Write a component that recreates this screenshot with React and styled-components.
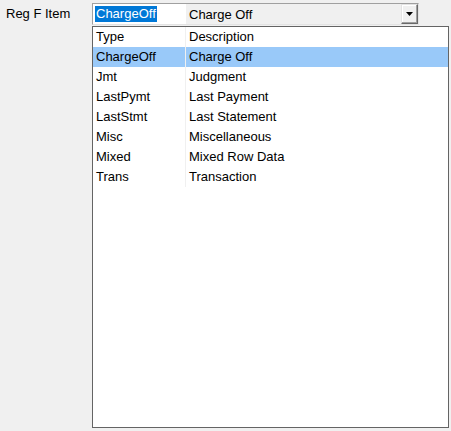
import React from 'react';
import styled, { createGlobalStyle } from 'styled-components';

const GlobalStyle = createGlobalStyle`
  html, body {
    margin: 0;
    padding: 0;
    background: #f0f0f0;
  }
  body {
    font-family: "Liberation Sans", Arial, sans-serif;
    font-size: 13px;
    color: #000;
  }
`;

const Page = styled.div`
  width: 451px;
  height: 431px;
  display: flex;
  align-items: flex-start;
  padding: 3px 0 0 6px;
  box-sizing: border-box;
`;

const Label = styled.div`
  width: 86px;
  flex: none;
  line-height: 21px;
  padding-top: 0px;
`;

const Field = styled.div`
  display: flex;
  flex-direction: column;
  gap: 1px;
`;

const Combo = styled.div`
  width: 327px;
  height: 22px;
  box-sizing: border-box;
  display: flex;
  border: 1px solid #a0a0a0;
  border-bottom-color: #e3e3e3;
  border-right-color: #e3e3e3;
  background: #f0f0f0;
`;

const ComboCell = styled.div`
  width: ${p => p.$w ? `${p.$w}px` : 'auto'};
  flex: ${p => p.$w ? 'none' : '1'};
  background: ${p => p.$white ? '#fff' : '#f0f0f0'};
  display: flex;
  align-items: center;
  padding-left: ${p => p.$pad}px;
`;

const Selected = styled.span`
  background: #0078d7;
  color: #fff;
  padding: 0 1px;
  line-height: 16px;
`;

const DropButton = styled.div`
  width: 17px;
  height: 20px;
  box-sizing: border-box;
  flex: none;
  display: flex;
  align-items: center;
  justify-content: center;
  background: #f0f0f0;
  border-top: 1px solid #e3e3e3;
  border-left: 1px solid #e3e3e3;
  border-right: 1px solid #696969;
  border-bottom: 1px solid #696969;
  box-shadow: inset -1px -1px 0 #a0a0a0, inset 1px 1px 0 #fff;
`;

const List = styled.div`
  width: 357px;
  height: 402px;
  box-sizing: border-box;
  border: 1px solid #646464;
  background: #fff;
`;

const Row = styled.div`
  display: flex;
  height: 20px;
  line-height: 20px;
  background: ${p => p.$active ? '#99c9f9' : '#fff'};
`;

const Cell = styled.div`
  flex: ${p => p.$grow ? '1' : 'none'};
  width: ${p => p.$grow ? 'auto' : '89px'};
  padding-left: 3px;
  border-right: ${p => p.$grow ? 'none' : '1px solid #f0f0f0'};
  white-space: nowrap;
`;

const rows = [
  ['Type', 'Description'],
  ['ChargeOff', 'Charge Off'],
  ['Jmt', 'Judgment'],
  ['LastPymt', 'Last Payment'],
  ['LastStmt', 'Last Statement'],
  ['Misc', 'Miscellaneous'],
  ['Mixed', 'Mixed Row Data'],
  ['Trans', 'Transaction'],
];

const Arrow = () => (
  <svg width="7" height="4" viewBox="0 0 7 4">
    <path d="M0 0 H7 L3.5 4 Z" fill="#000" />
  </svg>
);

export default function App() {
  return (
    <>
      <GlobalStyle />
      <Page>
        <Label>Reg F Item</Label>
        <Field>
          <Combo>
            <ComboCell $w={91} $white $pad={2}>
              <Selected>ChargeOff</Selected>
            </ComboCell>
            <ComboCell $pad={3}>Charge Off</ComboCell>
            <DropButton><Arrow /></DropButton>
          </Combo>
          <List>
            {rows.map(([t, d], i) => (
              <Row key={t} $active={i === 1}>
                <Cell>{t}</Cell>
                <Cell $grow>{d}</Cell>
              </Row>
            ))}
          </List>
        </Field>
      </Page>
    </>
  );
}
